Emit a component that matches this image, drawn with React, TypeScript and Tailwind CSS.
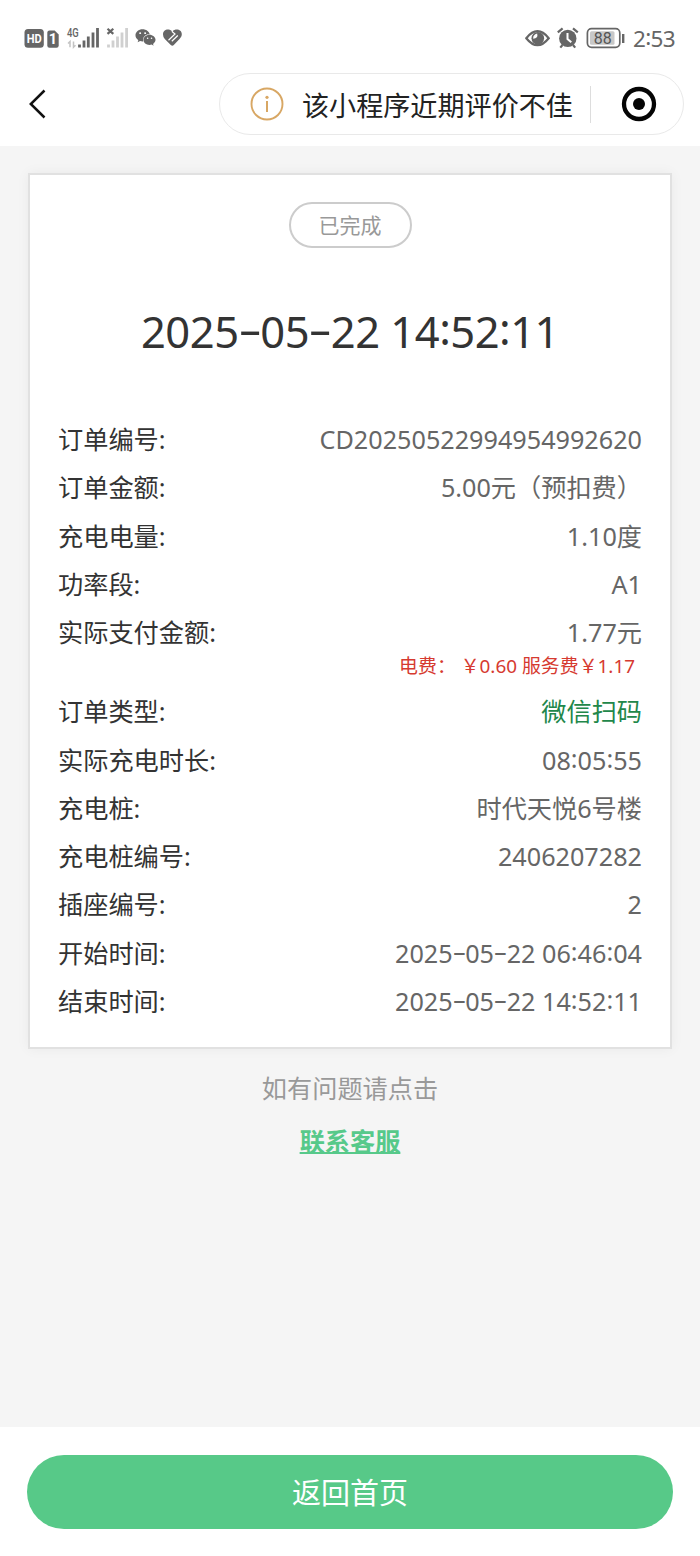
import { FaWeixin } from "react-icons/fa";

type Row = {
    label: string;
    value: string;
    note?: string;
    green?: boolean;
};

const rows: Row[] = [
    { label: "订单编号:", value: "CD20250522994954992620" },
    { label: "订单金额:", value: "5.00元（预扣费）" },
    { label: "充电电量:", value: "1.10度" },
    { label: "功率段:", value: "A1" },
    { label: "实际支付金额:", value: "1.77元", note: "电费： ￥0.60 服务费￥1.17" },
    { label: "订单类型:", value: "微信扫码", green: true },
    { label: "实际充电时长:", value: "08:05:55" },
    { label: "充电桩:", value: "时代天悦6号楼" },
    { label: "充电桩编号:", value: "2406207282" },
    { label: "插座编号:", value: "2" },
    { label: "开始时间:", value: "2025-05-22 06:46:04" },
    { label: "结束时间:", value: "2025-05-22 14:52:11" },
];

// dashes and colons sit at mid height of the digits
function Digits({ text }: { text: string }) {
    return (
        <>
            {text.split(/([-:])/).map((part, i) => {
                if (part === "-") return <span key={i} className="inline-block w-[0.5em] scale-x-[1.7] text-center leading-none align-[0.06em]">-</span>;
                if (part === ":") return <span key={i} className="leading-none align-[0.07em]">:</span>;
                return part;
            })}
        </>
    );
}

function StatusBar() {
    return (
        <div className="flex h-[73px] items-start justify-between pl-6 pr-[25px] pt-[26px] text-[#666]">
            <div className="flex">
                {/* HD + sim */}
                <svg width="36" height="24" viewBox="24 26 36 24">
                    <rect x="24.5" y="29" width="19.3" height="18.7" rx="3.5" fill="#666" />
                    <text x="34.2" y="43" textAnchor="middle" fontSize="13" fontWeight="700" fontFamily="Roboto, sans-serif" fill="#fff" textLength="15" lengthAdjust="spacingAndGlyphs">HD</text>
                    <path d="M49.5 30.500h5.200l4 4v11q0 2.200-2.200 2.200h-7q-2.200 0-2.200-2.200V32.700q0-2.200 2.200-2.200z" fill="#666" />
                    <text x="52.800" y="44.400" textAnchor="middle" fontSize="14.500" fontWeight="700" fontFamily="Roboto, sans-serif" fill="#fff">1</text>
                </svg>
                {/* 4G signal */}
                <svg className="ml-1.5" width="36" height="24" viewBox="66 26 36 24">
                    <text x="67" y="37.200" fontSize="13" fontWeight="500" fontFamily="Roboto, sans-serif" fill="#666" textLength="11.8" lengthAdjust="spacingAndGlyphs">4G</text>
                    <path d="M70 47.300v-5.800l-2 2M73.500 41.500v5.800l2-2" stroke="#c4c4c4" strokeWidth="1.500" fill="none" />
                    <path d="M79.500 47.400v-3M84 47.400v-7M88.300 47.400V36.500M93 47.400V32.500M97.500 47.400V28" stroke="#666" strokeWidth="2.800" />
                </svg>
                {/* empty slot */}
                <svg className="ml-1" width="24" height="24" viewBox="106 26 24 24">
                    <path d="M107.500 28.700l5.800 5.200M113.300 28.700l-5.800 5.200" stroke="#666" strokeWidth="2.200" />
                    <path d="M108.500 47.400v-3M113 47.400v-7M117.500 47.400V36.500M122 47.400V32.500M126.600 47.400V28" stroke="#d0d0d0" strokeWidth="2.800" />
                </svg>
                <FaWeixin className="ml-[5px] mt-px" size={21} />
                {/* health */}
                <svg className="ml-1.5" width="22" height="24" viewBox="162 26 22 24">
                    <path d="M163 34.500C163 29.500 168.500 28.200 172.300 31.200 176 28.200 181.800 29.500 181.800 34.300 181.800 36.300 181 37.500 179.500 39L173.800 45Q172.300 46.500 170.800 45L164.800 39Q163 37 163 34.500z" fill="#666" />
                    <path d="M172.300 29.500v2.200L175 34l-6.500 6.300M177.800 35.500l-6 5.800" stroke="#fff" strokeWidth="1.200" fill="none" />
                </svg>
            </div>
            <div className="flex">
                <svg width="26" height="24" viewBox="525 26 26 24">
                    <path d="M526.300 38.200Q537.500 24.200 548.700 38.200 537.500 52.200 526.300 38.200z" fill="none" stroke="#666" strokeWidth="2.200" />
                    <circle cx="537.800" cy="38.200" r="6.300" fill="#666" />
                    <path d="M537.200 33.500q1.200 4.800-4 5.200-.5-4 4-5.200z" fill="#fff" />
                </svg>
                <svg className="ml-[5px]" width="24" height="24" viewBox="556 26 24 24">
                    <circle cx="567.800" cy="38.400" r="8.700" fill="#666" />
                    <path d="M557.800 32.400l4.800-4M577.800 32.400l-4.800-4M562.500 45l-2.200 2.600M573 45l2.200 2.600" stroke="#666" strokeWidth="2.200" />
                    <path d="M567.500 33v6l3.800 3.200" stroke="#fff" strokeWidth="2" fill="none" />
                </svg>
                <svg className="ml-1.5" width="40" height="24" viewBox="586 26 40 24">
                    <rect x="587.400" y="28.700" width="32.400" height="18.600" rx="4.200" fill="none" stroke="#666" strokeWidth="1.700" />
                    <rect x="590" y="31.300" width="24.500" height="13.400" rx="1.500" fill="#c8c8c8" />
                    <text x="602.800" y="43.600" textAnchor="middle" fontSize="16" fontFamily="Roboto, sans-serif" fill="#555">88</text>
                    <path d="M623.200 34v9" stroke="#666" strokeWidth="2.400" />
                </svg>
                <div className="ml-[7px] w-[42px] whitespace-nowrap text-[22.500px] leading-[25px] tracking-[-0.700px]">
                    <Digits text="2:53" />
                </div>
            </div>
        </div>
    );
}

function NavBar() {
    return (
        <div className="flex h-[73px] items-start justify-between pl-7 pr-4">
            <svg className="mt-[15px]" width="20" height="32" viewBox="0 0 20 32" fill="none" stroke="#111" strokeWidth="2.500">
                <path d="M16.500 2.500L2.800 16l13.700 13.500" />
            </svg>
            <div className="flex h-[62px] w-[465px] items-center rounded-full border border-[#e9e9e9] pl-[29px]">
                <svg width="36" height="36" viewBox="0 0 36 36">
                    <circle cx="18" cy="18" r="15.500" fill="none" stroke="#d8a764" strokeWidth="1.900" />
                    <circle cx="18" cy="11.300" r="1.600" fill="#d8a764" />
                    <path d="M18 15v11" stroke="#d8a764" strokeWidth="2" />
                </svg>
                <div className="ml-[17px] w-[272px] whitespace-nowrap pt-[3px] text-[27.100px] leading-[40px] text-[#222]">该小程序近期评价不佳</div>
                <div className="ml-4 h-[37px] w-px bg-[#ddd]" />
                <svg className="ml-[29px]" width="38" height="38" viewBox="0 0 38 38">
                    <circle cx="19" cy="19" r="15" fill="none" stroke="#050505" strokeWidth="4.300" />
                    <circle cx="19" cy="19" r="6" fill="#050505" />
                </svg>
            </div>
        </div>
    );
}

export default function App() {
    return (
        <div className="flex h-[1556px] w-[700px] flex-col overflow-hidden bg-white font-['Noto_Sans','Noto_Sans_CJK_SC',sans-serif]">
            <StatusBar />
            <NavBar />
            <div className="flex h-[1281px] flex-col items-center bg-[#f5f5f5] pt-[27px]">
                {/* order card */}
                <div className="flex h-[876px] w-[644px] flex-col items-center border-2 border-[#e1e1e1] bg-white px-[28px] pt-[27px] shadow-[0_0_12px_rgba(0,0,0,0.05)]">
                    <div className="flex h-[46px] w-[123px] items-center justify-center rounded-full border-2 border-[#ccc] pt-px text-[21px] leading-none text-[#999]">已完成</div>
                    <div className="mt-[53px] whitespace-nowrap text-[43.500px] leading-[60px] tracking-[-0.500px] text-[#333]">
                        <Digits text="2025-05-22 14:52:11" />
                    </div>
                    <div className="mt-[54px] w-full">
                        {rows.map((row) => (
                            <div key={row.label}>
                                <div className="flex h-[48.250px] items-center justify-between whitespace-nowrap text-[25.200px] leading-[36px]">
                                    <div className="text-[#333]">{row.label}</div>
                                    <div className={row.green ? "text-[#22874a]" : "text-[#666]"}>
                                        <Digits text={row.value} />
                                    </div>
                                </div>
                                {row.note && (
                                    <div className="h-[31px] whitespace-pre pr-[7px] text-right text-[18.900px] leading-[21px] text-[#d63a30]">{row.note}</div>
                                )}
                            </div>
                        ))}
                    </div>
                </div>
                <div className="mt-[21px] text-[25.200px] leading-[36px] text-[#999]">如有问题请点击</div>
                <a className="mt-[17px] text-[25.200px] font-bold leading-[36px] text-[#57c98a] underline decoration-2 underline-offset-1">联系客服</a>
            </div>
            {/* bottom action */}
            <div className="px-[27px] pt-[28px]">
                <button className="flex h-[74px] w-full items-center justify-center rounded-full bg-[#57c988] text-[29px] leading-none text-white">返回首页</button>
            </div>
        </div>
    );
}
